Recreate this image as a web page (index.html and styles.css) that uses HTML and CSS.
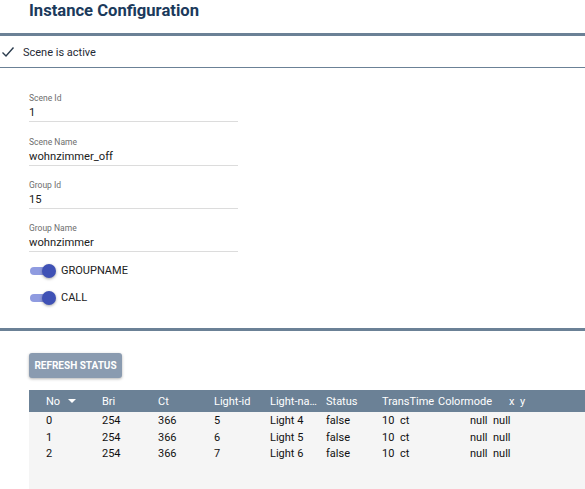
FILE: index.html
```html
<!DOCTYPE html>
<html>
<head>
<meta charset="utf-8">
<link rel="stylesheet" href="styles.css">
</head>
<body>
<h1 class="title">Instance Configuration</h1>
<div class="sep-thick"></div>
<div class="active-row">
  <svg class="check" width="14" height="12" viewBox="0 0 14 12"><path d="M1.5 6.5 L5 10 L12.5 1.5" fill="none" stroke="#2a3b4d" stroke-width="1.4"/></svg>
  <span>Scene is active</span>
</div>
<div class="sep-thin"></div>
<div class="form">
  <div class="field"><div class="label">Scene Id</div><div class="value">1</div></div>
  <div class="field"><div class="label">Scene Name</div><div class="value">wohnzimmer_off</div></div>
  <div class="field"><div class="label">Group Id</div><div class="value">15</div></div>
  <div class="field"><div class="label">Group Name</div><div class="value">wohnzimmer</div></div>
  <div class="toggle-row"><span class="switch"><span class="track"></span><span class="thumb"></span></span><span class="tlabel">GROUPNAME</span></div>
  <div class="toggle-row"><span class="switch"><span class="track"></span><span class="thumb"></span></span><span class="tlabel">CALL</span></div>
</div>
<div class="sep-thick"></div>
<div class="status">
  <button class="btn">REFRESH STATUS</button>
  <div class="table">
    <div class="thead">
      <span class="c c1">No <svg class="sort" width="8" height="5" viewBox="0 0 8 5"><path d="M0 0 L8 0 L4 4 Z" fill="#ffffff"/></svg></span>
      <span class="c">Bri</span>
      <span class="c">Ct</span>
      <span class="c">Light-id</span>
      <span class="c">Light-na…</span>
      <span class="c">Status</span>
      <span class="c">TransTime</span>
      <span class="c cm">Colormode</span>
      <span class="c cx">x</span>
      <span class="c cy">y</span>
    </div>
    <div class="tbody">
      <div class="tr"><span class="c c1">0</span><span class="c">254</span><span class="c">366</span><span class="c">5</span><span class="c">Light 4</span><span class="c">false</span><span class="c tt">10</span><span class="c ct">ct</span><span class="c n1">null</span><span class="c n2">null</span></div>
      <div class="tr"><span class="c c1">1</span><span class="c">254</span><span class="c">366</span><span class="c">6</span><span class="c">Light 5</span><span class="c">false</span><span class="c tt">10</span><span class="c ct">ct</span><span class="c n1">null</span><span class="c n2">null</span></div>
      <div class="tr"><span class="c c1">2</span><span class="c">254</span><span class="c">366</span><span class="c">7</span><span class="c">Light 6</span><span class="c">false</span><span class="c tt">10</span><span class="c ct">ct</span><span class="c n1">null</span><span class="c n2">null</span></div>
    </div>
  </div>
</div>
</body>
</html>
```
FILE: styles.css
```css
* { box-sizing: border-box; }
html, body { margin: 0; padding: 0; background: #ffffff; }
body { font-family: Roboto, "Liberation Sans", sans-serif; color: #212121; width: 585px; height: 489px; overflow: hidden; }

.title { margin: 0; padding: 1px 0 0 29px; height: 33px; font-size: 16.6px; font-weight: 700; color: #1b3a5c; line-height: 20px; }
.sep-thick { height: 3px; background: #6b8196; }
.active-row { height: 31px; display: flex; align-items: center; font-size: 11px; color: #1f2a36; padding-top: 1px; }
.check { margin-left: 1px; margin-right: 8px; }
.sep-thin { height: 1px; background: #6b8196; }

.form { padding: 25px 0 0 29px; height: 260px; }
.field { width: 209px; border-bottom: 1px solid #dcdcdc; margin-bottom: 14px; height: 29px; }
.field:first-child { margin-bottom: 15px; }
.label { font-size: 8.5px; color: #6d6d6d; line-height: 10px; height: 12px; }
.value { font-size: 11.2px; color: #212121; line-height: 16px; }

.toggle-row { display: flex; align-items: center; height: 27px; margin-top: -9px; }
.toggle-row + .toggle-row { margin-top: 0; }
.switch { position: relative; width: 26px; height: 14px; margin-left: 1px; margin-right: 5px; }
.track { position: absolute; left: 0; top: 3px; width: 24px; height: 8px; border-radius: 4px; background: #8f9be0; }
.thumb { position: absolute; left: 12px; top: 0; width: 14px; height: 14px; border-radius: 50%; background: #3f51b5; box-shadow: 0 1px 3px rgba(0,0,0,0.35); }
.tlabel { font-size: 11px; color: #212121; }

.status { padding: 22px 0 0 29px; }
.btn { display: block; width: 93px; height: 25px; border: none; border-radius: 3px; background: #8a9bb0; color: #ffffff; font-family: Roboto, "Liberation Sans", sans-serif; font-size: 10px; font-weight: 700; padding: 0; box-shadow: 0 1px 3px rgba(0,0,0,0.3); }
.table { margin-top: 12px; background: #f5f5f5; height: 100px; }
.thead { display: flex; height: 22px; align-items: center; background: #6b8196; color: #ffffff; font-size: 11px; padding-left: 17px; }
.thead .c, .tr .c { width: 56px; white-space: nowrap; flex: none; }
.sort { margin-left: 5px; vertical-align: middle; }
.thead .cm { width: 71px; }
.thead .cx { width: 11px; }
.thead .cy { width: 11px; }
.tbody { padding-top: 1px; }
.tr { display: flex; height: 16.5px; line-height: 16px; font-size: 11px; color: #111; padding-left: 17px; }
.tr .tt { width: 18px; }
.tr .ct { width: 70px; }
.tr .n1 { width: 23px; }
.tr .n2 { width: 30px; }
```
